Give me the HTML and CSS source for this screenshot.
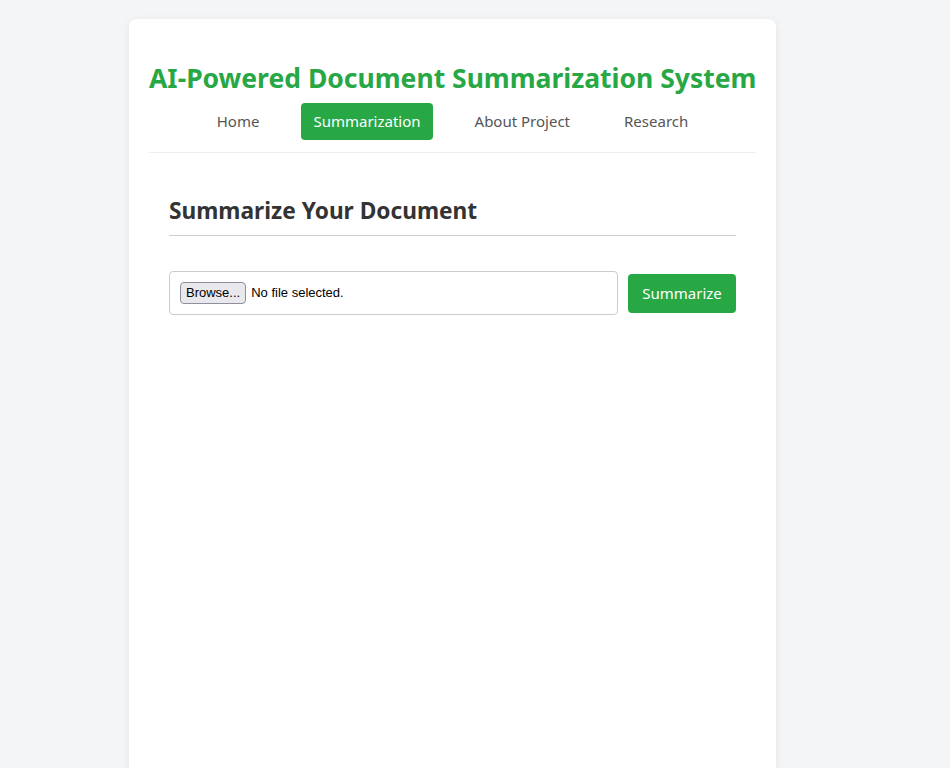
FILE: index.html
```html
<!DOCTYPE html>
<html lang="en">
<head>
<meta charset="utf-8">
<title>AI-Powered Document Summarization System</title>
<link rel="stylesheet" href="styles.css">
</head>
<body>
<div class="page">
  <div class="card">
    <header class="header">
      <h1 class="title">AI-Powered Document Summarization System</h1>
      <nav class="nav">
        <a class="nav-link" href="#">Home</a>
        <a class="nav-link active" href="#">Summarization</a>
        <a class="nav-link" href="#">About Project</a>
        <a class="nav-link" href="#">Research</a>
      </nav>
    </header>
    <section class="section">
      <h2 class="section-title">Summarize Your Document</h2>
      <form class="upload-form">
        <label class="file-box">
          <span class="browse-btn">Browse...</span>
          <span class="file-name">No file selected.</span>
        </label>
        <button class="submit-btn" type="button">Summarize</button>
      </form>
    </section>
  </div>
</div>
</body>
</html>
```
FILE: styles.css
```css
* { box-sizing: border-box; }
html, body { margin: 0; padding: 0; }
body {
  background: #f4f5f7;
  font-family: "Noto Sans", "Open Sans", sans-serif;
  color: #333;
}
.page {
  padding: 19px 0 0 129px;
}
.card {
  width: 647px;
  min-height: 749px;
  background: #fff;
  border-radius: 8px 8px 0 0;
  box-shadow: 0 2px 8px rgba(0, 0, 0, 0.08);
  padding: 0 20px;
}
.header {
  padding-top: 42px;
  padding-bottom: 12px;
  border-bottom: 1px solid #eeeeee;
  text-align: center;
}
.title {
  margin: 0;
  font-size: 26.5px;
  line-height: 34px;
  font-weight: 700;
  color: #28a745;
  white-space: nowrap;
}
.nav {
  margin-top: 8px;
  display: flex;
  justify-content: center;
  gap: 30px;
}
.nav-link {
  display: block;
  padding: 8px 12px;
  font-size: 15px;
  line-height: 21px;
  color: #555;
  text-decoration: none;
  border-radius: 4px;
}
.nav-link.active {
  background: #28a745;
  color: #fff;
}
.section {
  padding: 43px 20px 0;
}
.section-title {
  margin: 0;
  font-size: 22.7px;
  line-height: 29px;
  font-weight: 700;
  color: #333;
  padding-bottom: 10px;
  border-bottom: 1px solid #cccccc;
}
.upload-form {
  margin-top: 35px;
  display: flex;
  align-items: center;
  gap: 10px;
}
.file-box {
  flex: 1;
  height: 44px;
  border: 1px solid #cccccc;
  border-radius: 4px;
  display: flex;
  align-items: center;
  padding: 0 10px;
  font-family: "Liberation Sans", Arial, sans-serif;
  font-size: 13px;
  color: #000;
}
.browse-btn {
  display: inline-block;
  height: 22px;
  line-height: 20px;
  padding: 0 5px;
  background: #e9e9ed;
  border: 1px solid #8f8f9d;
  border-radius: 4px;
  margin-right: 5px;
}
.file-name { line-height: 20px; }
.submit-btn {
  width: 108px;
  height: 39px;
  background: #28a745;
  color: #fff;
  border: 0;
  border-radius: 4px;
  font-family: "Noto Sans", "Open Sans", sans-serif;
  font-size: 15px;
  padding: 0;
}
```
